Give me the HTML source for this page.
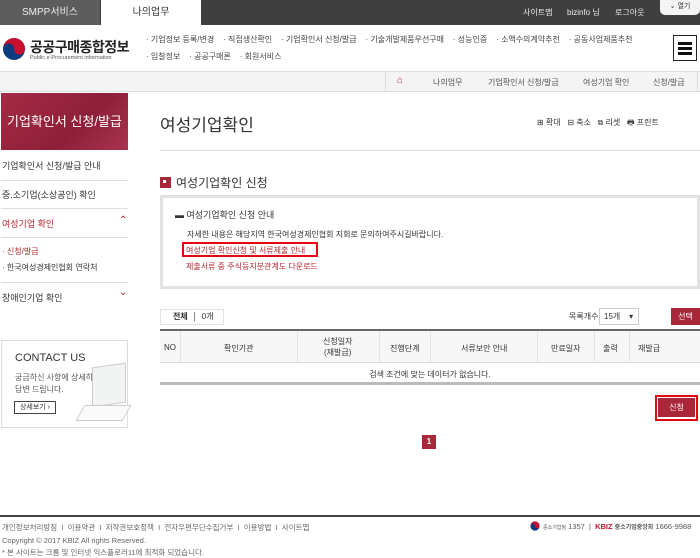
<!DOCTYPE html>
<html><head><meta charset="utf-8"><style>
*{margin:0;padding:0;box-sizing:border-box}
body{width:700px;height:553px;overflow:hidden;background:#fff;font-family:"Liberation Sans","Noto Sans CJK KR",sans-serif;font-size:9px;color:#333;position:relative}
.a{position:absolute;white-space:nowrap}
.red{color:#b3262e}
</style></head><body>
<div class="a" style="left:0;top:0;width:700px;height:25px;background:#3f3f3f"></div>
<div class="a" style="left:0;top:0;width:100px;height:25px;background:#5d5d5d;color:#eee;font-size:10px;text-align:center;line-height:25px">SMPP서비스</div>
<div class="a" style="left:101px;top:0;width:100px;height:25px;background:#fff;color:#333;font-size:10px;text-align:center;line-height:25px">나의업무</div>
<div class="a" style="left:523px;top:7px;color:#eee;font-size:8px">사이트맵</div>
<div class="a" style="left:567px;top:7px;color:#eee;font-size:8px">bizinfo 님</div>
<div class="a" style="left:615px;top:7px;color:#eee;font-size:8px">로그아웃</div>
<div class="a" style="left:660px;top:0;width:40px;height:15px;background:#f4f4f4;border-radius:0 0 5px 5px;font-size:7px;line-height:13px;text-align:center;color:#333">⌄ 열기</div>
<svg class="a" style="left:2px;top:37px" width="24" height="24" viewBox="0 0 24 24"><circle cx="12" cy="12" r="11" fill="#0b3a7e"/><path d="M1 12a11 11 0 0 1 22 0a5.5 5.5 0 0 1-11 0a5.5 5.5 0 0 0-11 0z" fill="#c8102e"/></svg>
<div class="a" style="left:30px;top:37px;font-size:14px;font-weight:bold;color:#222;letter-spacing:-0.5px">공공구매종합정보</div>
<div class="a" style="left:30px;top:55px;font-size:5.5px;color:#555">Public e-Procurement information</div>
<div class="a" style="left:146px;top:34px;font-size:8px;color:#444">· 기업정보 등록/변경 &nbsp;&nbsp;&nbsp;· 직접생산확인 &nbsp;&nbsp;&nbsp;· 기업확인서 신청/발급 &nbsp;&nbsp;&nbsp;· 기술개발제품우선구매 &nbsp;&nbsp;&nbsp;· 성능인증 &nbsp;&nbsp;&nbsp;· 소액수의계약추천 &nbsp;&nbsp;&nbsp;· 공동사업제품추천</div>
<div class="a" style="left:146px;top:51px;font-size:8px;color:#444">· 입찰정보 &nbsp;&nbsp;&nbsp;· 공공구매론 &nbsp;&nbsp;&nbsp;· 회원서비스</div>
<div class="a" style="left:673px;top:35px;width:24px;height:26px;border:1px solid #222;padding:6px 4px"><div style="height:3px;background:#111;margin-bottom:2px"></div><div style="height:3px;background:#111;margin-bottom:2px"></div><div style="height:3px;background:#111"></div></div>
<div class="a" style="left:0;top:71px;width:700px;height:21px;background:#f4f4f4;border-top:1px solid #ddd;border-bottom:1px solid #ddd"></div>
<div class="a" style="left:385px;top:72px;width:1px;height:19px;background:#ddd"></div>
<div class="a" style="left:397px;top:75px;color:#b3262e;font-size:10px">⌂</div>
<div class="a" style="left:433px;top:77px;font-size:8px;color:#555">나의업무</div>
<div class="a" style="left:488px;top:77px;font-size:8px;color:#555">기업확인서 신청/발급</div>
<div class="a" style="left:583px;top:77px;font-size:8px;color:#555">여성기업 확인</div>
<div class="a" style="left:653px;top:77px;font-size:8px;color:#555">신청/발급</div>
<div class="a" style="left:697px;top:72px;width:1px;height:19px;background:#ddd"></div>
<div class="a" style="left:1px;top:93px;width:127px;height:57px;background:linear-gradient(135deg,#a52a45,#8e1f38 60%,#a8344e);color:#fff;font-size:13px;line-height:57px;padding-left:6px;overflow:hidden">기업확인서 신청/발급</div>
<div class="a" style="left:2px;top:159px;font-size:9px">기업확인서 신청/발급 안내</div>
<div class="a" style="left:1px;top:180px;width:127px;height:1px;background:#ddd"></div>
<div class="a" style="left:2px;top:188px;font-size:9px">중.소기업(소상공인) 확인</div>
<div class="a" style="left:1px;top:208px;width:127px;height:1px;background:#ddd"></div>
<div class="a red" style="left:2px;top:217px;font-size:9px">여성기업 확인</div>
<div class="a red" style="left:119px;top:215px;font-size:10px">⌃</div>
<div class="a" style="left:1px;top:237px;width:127px;height:1px;background:#ddd"></div>
<div class="a red" style="left:2px;top:246px;font-size:8px">· 신청/발급</div>
<div class="a" style="left:2px;top:262px;font-size:8px">· 한국여성경제인협회 연락처</div>
<div class="a" style="left:1px;top:282px;width:127px;height:1px;background:#ddd"></div>
<div class="a" style="left:2px;top:291px;font-size:9px">장애인기업 확인</div>
<div class="a red" style="left:119px;top:287px;font-size:10px">⌄</div>
<div class="a" style="left:1px;top:340px;width:127px;height:88px;border:1px solid #ddd"></div>
<div class="a" style="left:15px;top:352px;font-size:11px;color:#333">CONTACT US</div>
<div class="a" style="left:15px;top:372px;font-size:8px;color:#555;line-height:12px">궁금하신 사항에 상세히<br>답변 드립니다.</div>
<div class="a" style="left:14px;top:401px;width:42px;height:13px;border:1px solid #444;font-size:7px;line-height:11px;text-align:center">상세보기 ›</div>
<div class="a" style="left:92px;top:365px;width:34px;height:40px;border:1px solid #ccc;background:#f2f4f4;transform:skewY(-8deg)"></div>
<div class="a" style="left:80px;top:405px;width:47px;height:16px;border:1px solid #ccc;background:#fafafa;transform:skewX(-30deg)"></div>
<div class="a" style="left:160px;top:111px;font-size:17px;color:#333">여성기업확인</div>
<div class="a" style="left:537px;top:117px;font-size:8px;color:#333">⊞ 확대 &nbsp;&nbsp;⊟ 축소 &nbsp;&nbsp;⧉ 리셋 &nbsp;&nbsp;🖶 프린트</div>
<div class="a" style="left:160px;top:150px;width:540px;height:1px;background:#ddd"></div>
<div class="a" style="left:160px;top:177px;width:11px;height:11px;background:#a8283a;border:2px solid #a8283a"><div style="margin:1px;width:3px;height:3px;background:#fff"></div></div>
<div class="a" style="left:176px;top:174px;font-size:12px;color:#333">여성기업확인 신청</div>
<div class="a" style="left:160px;top:195px;width:540px;height:94px;border:3px solid #e2e2e2"></div>
<div class="a" style="left:175px;top:208px;font-size:9px;color:#333">▬ 여성기업확인 신청 안내</div>
<div class="a" style="left:187px;top:229px;font-size:8px;color:#333">자세한 내용은 해당지역 한국여성경제인협회 지회로 문의하여주시길바랍니다.</div>
<div class="a" style="left:182px;top:242px;width:136px;height:15px;border:2px solid #e30613"></div>
<div class="a red" style="left:186px;top:245px;font-size:8px">여성기업 확인신청 및 서류제출 안내</div>
<div class="a red" style="left:186px;top:261px;font-size:8px">제출서류 중 주식등지분관계도 다운로드</div>
<div class="a" style="left:160px;top:309px;width:64px;height:16px;border:1px solid #e4e4e4;font-size:8px;line-height:14px;padding-left:12px"><b>전체</b> &nbsp;│&nbsp; 0개</div>
<div class="a" style="left:569px;top:311px;font-size:8px;color:#333">목록개수</div>
<div class="a" style="left:599px;top:308px;width:40px;height:17px;border:1px solid #ccc;font-size:8px;line-height:15px;padding-left:4px">15개 &nbsp;&nbsp;&nbsp;▾</div>
<div class="a" style="left:671px;top:308px;width:29px;height:17px;background:#a8283a;color:#fff;font-size:8px;text-align:center;line-height:17px">선택</div>
<div class="a" style="left:160px;top:329px;width:540px;height:56px;border-top:2px solid #666;border-bottom:3px solid #bbb"></div>
<div class="a" style="left:160px;top:331px;width:540px;height:32px;background:#f7f7f7;border-bottom:1px solid #ddd"></div>
<div class="a" style="left:180px;top:331px;width:1px;height:32px;background:#e3e3e3"></div>
<div class="a" style="left:297px;top:331px;width:1px;height:32px;background:#e3e3e3"></div>
<div class="a" style="left:379px;top:331px;width:1px;height:32px;background:#e3e3e3"></div>
<div class="a" style="left:430px;top:331px;width:1px;height:32px;background:#e3e3e3"></div>
<div class="a" style="left:537px;top:331px;width:1px;height:32px;background:#e3e3e3"></div>
<div class="a" style="left:594px;top:331px;width:1px;height:32px;background:#e3e3e3"></div>
<div class="a" style="left:629px;top:331px;width:1px;height:32px;background:#e3e3e3"></div>
<div class="a" style="left:164px;top:343px;font-size:8px">NO</div>
<div class="a" style="left:224px;top:343px;font-size:8px">확인기관</div>
<div class="a" style="left:323px;top:336px;font-size:8px;text-align:center;line-height:11px">신청일자<br>(재발급)</div>
<div class="a" style="left:390px;top:343px;font-size:8px">진행단계</div>
<div class="a" style="left:461px;top:343px;font-size:8px">서류보안 안내</div>
<div class="a" style="left:551px;top:343px;font-size:8px">만료일자</div>
<div class="a" style="left:603px;top:343px;font-size:8px">출력</div>
<div class="a" style="left:638px;top:343px;font-size:8px">재발급</div>
<div class="a" style="left:160px;top:369px;width:540px;text-align:center;font-size:8px">검색 조건에 맞는 데이터가 없습니다.</div>
<div class="a" style="left:655px;top:395px;width:43px;height:26px;border:2px solid #e30613;padding:1px"><div style="background:#a8283a;height:100%;color:#fff;font-size:8px;text-align:center;line-height:19px;border-bottom:1px solid #fff">신청</div></div>
<div class="a" style="left:422px;top:435px;width:14px;height:14px;background:#a8283a;color:#fff;font-size:8px;font-weight:bold;text-align:center;line-height:14px">1</div>
<div class="a" style="left:0;top:515px;width:700px;height:2px;background:#444"></div>
<div class="a" style="left:2px;top:522px;font-size:7.5px;color:#666">개인정보처리방침 &nbsp;I&nbsp; 이용약관 &nbsp;I&nbsp; 저작권보호정책 &nbsp;I&nbsp; 전자우편무단수집거부 &nbsp;I&nbsp; 이용방법 &nbsp;I&nbsp; 사이트맵</div>
<div class="a" style="left:2px;top:536px;font-size:7.5px;color:#666">Copyright © 2017 KBIZ All rights Reserved.</div>
<div class="a" style="left:2px;top:547px;font-size:7.5px;color:#666">* 본 사이트는 크롬 및 인터넷 익스플로러11에 최적화 되었습니다.</div>
<svg class="a" style="left:530px;top:521px" width="10" height="10" viewBox="0 0 24 24"><circle cx="12" cy="12" r="11" fill="#0b3a7e"/><path d="M1 12a11 11 0 0 1 22 0a5.5 5.5 0 0 1-11 0a5.5 5.5 0 0 0-11 0z" fill="#c8102e"/></svg>
<div class="a" style="left:543px;top:522px;font-size:7.5px;color:#555"><span style="font-size:5px">중소기업청</span> 1357 &nbsp;| &nbsp;<b style="color:#c8102e">KBIZ</b> <span style="font-size:6px;font-weight:bold">중소기업중앙회</span> 1666-9988</div>
</body></html>
